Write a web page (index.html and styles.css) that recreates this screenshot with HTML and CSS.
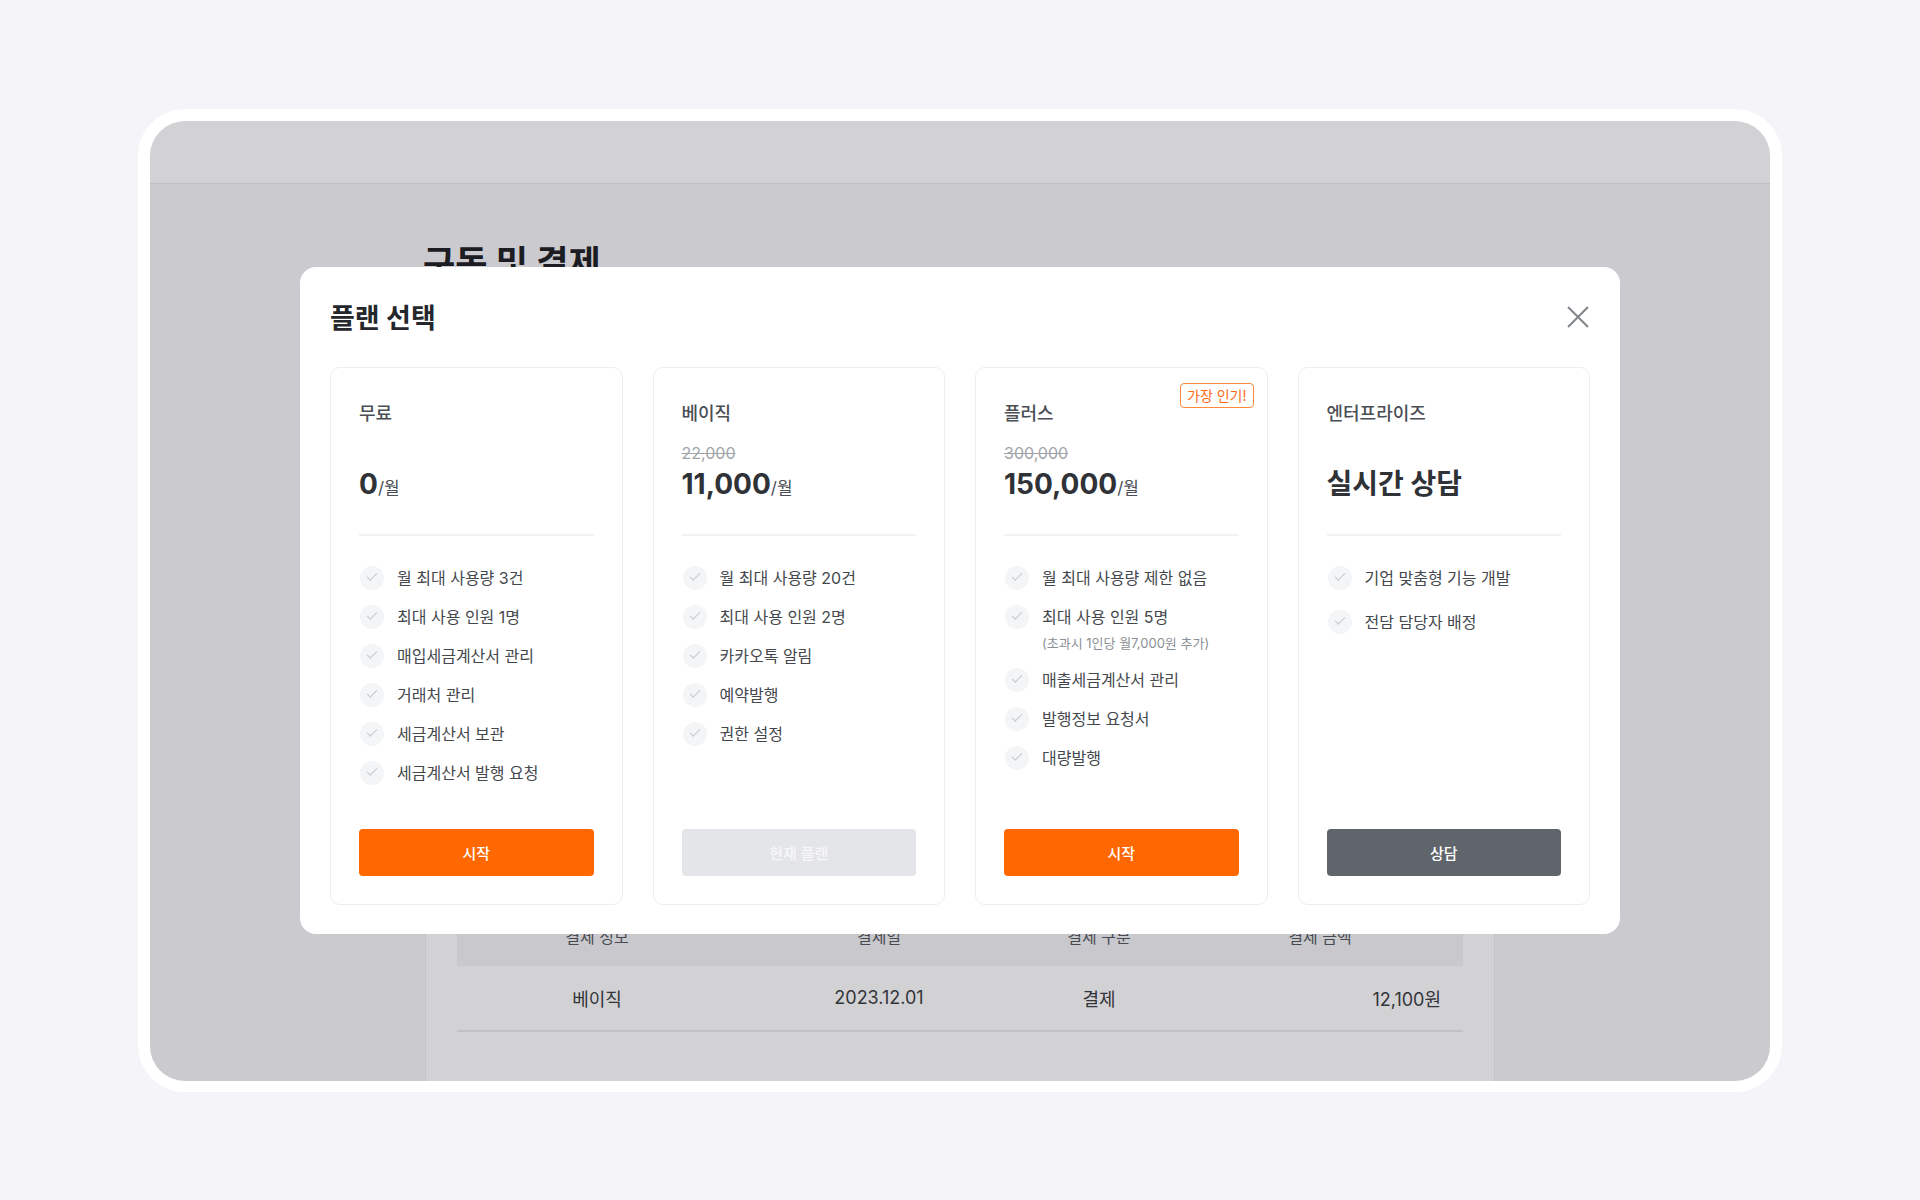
FILE: index.html
```html
<!DOCTYPE html>
<html lang="ko">
    <head>
        <meta charset="UTF-8">
        <meta name="viewport" content="width=device-width, initial-scale=1.0">
        <title>구독 및 결제 - 플랜 선택</title>
        <link rel="stylesheet" href="styles.css">
    </head>
    <body>
        <div class="frame">
            <div class="screen">
                <header class="topbar"></header>
                <main class="page">
                    <div class="page-inner">
                        <h1 class="page-title">구독 및 결제</h1>
                        <section class="panel">
                            <div class="history">
                                <div class="history-head">
                                    <span>결제 정보</span>
                                    <span>결제일</span>
                                    <span>결제 구분</span>
                                    <span>결제 금액</span>
                                </div>
                                <div class="history-row">
                                    <span>베이직</span>
                                    <span>2023.12.01</span>
                                    <span>결제</span>
                                    <span class="amount">12,100원</span>
                                </div>
                            </div>
                        </section>
                    </div>
                </main>

                <div class="dim">
                    <div class="modal">
                        <div class="modal-head">
                            <h2 class="modal-title">플랜 선택</h2>
                            <button class="close-btn" aria-label="닫기">
                                <svg width="22" height="22" viewBox="0 0 22 22">
                                    <path d="M1 1L21 21M21 1L1 21" stroke="#80858b" stroke-width="2" fill="none"/>
                                </svg>
                            </button>
                        </div>

                        <div class="plans">
                            <div class="plan">
                                <div class="plan-name">무료</div>
                                <div class="price-old"></div>
                                <div class="price">0<span class="unit">/월</span></div>
                                <div class="divider"></div>
                                <ul class="features">
                                    <li><span class="check"></span><span>월 최대 사용량 3건</span></li>
                                    <li><span class="check"></span><span>최대 사용 인원 1명</span></li>
                                    <li><span class="check"></span><span>매입세금계산서 관리</span></li>
                                    <li><span class="check"></span><span>거래처 관리</span></li>
                                    <li><span class="check"></span><span>세금계산서 보관</span></li>
                                    <li><span class="check"></span><span>세금계산서 발행 요청</span></li>
                                </ul>
                                <button class="plan-btn primary">시작</button>
                            </div>

                            <div class="plan">
                                <div class="plan-name">베이직</div>
                                <div class="price-old">22,000</div>
                                <div class="price">11,000<span class="unit">/월</span></div>
                                <div class="divider"></div>
                                <ul class="features">
                                    <li><span class="check"></span><span>월 최대 사용량 20건</span></li>
                                    <li><span class="check"></span><span>최대 사용 인원 2명</span></li>
                                    <li><span class="check"></span><span>카카오톡 알림</span></li>
                                    <li><span class="check"></span><span>예약발행</span></li>
                                    <li><span class="check"></span><span>권한 설정</span></li>
                                </ul>
                                <button class="plan-btn current" disabled>현재 플랜</button>
                            </div>

                            <div class="plan">
                                <span class="badge">가장 인기!</span>
                                <div class="plan-name">플러스</div>
                                <div class="price-old">300,000</div>
                                <div class="price">150,000<span class="unit">/월</span></div>
                                <div class="divider"></div>
                                <ul class="features">
                                    <li><span class="check"></span><span>월 최대 사용량 제한 없음</span></li>
                                    <li>
                                        <span class="check"></span>
                                        <span>최대 사용 인원 5명
                                            <span class="note">(초과시 1인당 월7,000원 추가)</span>
                                        </span>
                                    </li>
                                    <li><span class="check"></span><span>매출세금계산서 관리</span></li>
                                    <li><span class="check"></span><span>발행정보 요청서</span></li>
                                    <li><span class="check"></span><span>대량발행</span></li>
                                </ul>
                                <button class="plan-btn primary">시작</button>
                            </div>

                            <div class="plan">
                                <div class="plan-name">엔터프라이즈</div>
                                <div class="price-old"></div>
                                <div class="price text">실시간 상담</div>
                                <div class="divider"></div>
                                <ul class="features wide">
                                    <li><span class="check"></span><span>기업 맞춤형 기능 개발</span></li>
                                    <li><span class="check"></span><span>전담 담당자 배정</span></li>
                                </ul>
                                <button class="plan-btn dark">상담</button>
                            </div>
                        </div>
                    </div>
                </div>
            </div>
        </div>
    </body>
</html>
```

FILE: styles.css
```css
* {
    box-sizing: border-box;
    font-family: Inter, "Noto Sans CJK KR", sans-serif;
}

body {
    display: flex;
    justify-content: center;
    align-items: center;
    height: 100vh;
    margin: 0;
    background: #f5f5f9;
}

/* 바깥 프레임 */
.frame {
    width: 1644px;
    height: 983px;
    padding: 12px 12px 11px;
    background: #fff;
    border-radius: 47px;
}

.screen {
    position: relative;
    display: flex;
    flex-direction: column;
    height: 100%;
    overflow: hidden;
    border-radius: 35px;
    background: #f6f6f8;
}

.topbar {
    height: 63px;
    flex-shrink: 0;
    background: #fff;
    border-bottom: 1px solid #e9e9ec;
}

.page {
    flex: 1;
}

.page-inner {
    display: flex;
    flex-direction: column;
    width: 1070px;
    height: 100%;
    margin: 0 auto;
    padding-top: 56px;
}

.page-title {
    margin: 0 0 0 -2px;
    font-size: 35px;
    line-height: 46px;
    font-weight: 700;
    color: #1f2124;
}

.panel {
    flex: 1;
    margin-top: 30px;
    padding: 0 31px;
    background: #fff;
    border-left: 1px solid #ececef;
    border-right: 1px solid #ececef;
}

.history {
    margin-top: 590px;
}

.history-head,
.history-row {
    display: grid;
    grid-template-columns: 280px 284px 156px 1fr;
    align-items: center;
    text-align: center;
}

.history-head {
    height: 60px;
    background: #f3f3f5;
    font-size: 16px;
    color: #55585d;
}

.history-row {
    height: 66px;
    border-bottom: 2px solid #ebebee;
    font-size: 18px;
    color: #3b3d41;
}

.history-row .amount {
    text-align: right;
    padding-right: 22px;
}

/* 딤 + 모달 */
.dim {
    position: absolute;
    inset: 0;
    display: flex;
    justify-content: center;
    align-items: center;
    background: rgba(17, 17, 34, 0.19);
}

.modal {
    width: 1320px;
    padding: 32px 30px 29px;
    background: #fff;
    border-radius: 16px;
}

.modal-head {
    display: flex;
    justify-content: space-between;
    align-items: center;
    height: 36px;
    margin-bottom: 32px;
}

.modal-title {
    margin: 0;
    padding-top: 4px;
    font-size: 27px;
    line-height: 36px;
    font-weight: 700;
    color: #24272b;
}

.close-btn {
    display: flex;
    padding: 0;
    margin-right: 1px;
    border: none;
    background: none;
    cursor: pointer;
}

.plans {
    display: grid;
    grid-template-columns: repeat(4, 1fr);
    gap: 30px;
}

.plan {
    position: relative;
    display: flex;
    flex-direction: column;
    padding: 33px 28px 28px;
    border: 1px solid #eceef0;
    border-radius: 10px;
}

.badge {
    position: absolute;
    top: 15px;
    right: 13px;
    padding: 0 6px;
    font-size: 14px;
    line-height: 23px;
    color: #ff6a13;
    border: 1px solid #ff8a3d;
    border-radius: 4px;
}

.plan-name {
    font-size: 18px;
    line-height: 26px;
    font-weight: 500;
    color: #4b4f55;
}

.price-old {
    height: 20px;
    margin-top: 16px;
    font-size: 16px;
    line-height: 20px;
    color: #a0a4a9;
    text-decoration: line-through;
}

.price {
    height: 36px;
    margin-top: 3px;
    font-size: 28px;
    line-height: 36px;
    font-weight: 700;
    color: #2f3237;
}

.price .unit {
    font-size: 17px;
    line-height: 1;
    font-weight: 400;
    color: #4b4f55;
}

.price.text {
    font-size: 28px;
}

.divider {
    height: 2px;
    margin-top: 32px;
    background: #f1f2f4;
}

.features {
    display: flex;
    flex-direction: column;
    gap: 15px;
    margin: 30px 0 0;
    padding: 0 0 44px 1px;
    list-style: none;
}

.features.wide {
    gap: 20px;
}

.features li {
    display: flex;
    align-items: flex-start;
    gap: 13px;
    font-size: 16px;
    line-height: 24px;
    color: #44484d;
}

.check {
    position: relative;
    flex-shrink: 0;
    width: 24px;
    height: 24px;
    border-radius: 50%;
    background: #f4f5f7;
}

.check::after {
    content: "";
    position: absolute;
    left: 7px;
    top: 7px;
    width: 9px;
    height: 4px;
    border-left: 1.6px solid #c6c9ce;
    border-bottom: 1.6px solid #c6c9ce;
    transform: rotate(-45deg);
}

.note {
    display: block;
    margin-top: 5px;
    font-size: 13px;
    line-height: 19px;
    color: #8b9096;
}

.plan-btn {
    margin-top: auto;
    height: 47px;
    border: none;
    border-radius: 4px;
    font-size: 15px;
    font-weight: 500;
    color: #fff;
    cursor: pointer;
}

.plan-btn.primary {
    background: #ff6700;
}

.plan-btn.current {
    background: #e4e5e8;
    color: #f7f7f8;
    cursor: default;
}

.plan-btn.dark {
    background: #60656b;
}
```
